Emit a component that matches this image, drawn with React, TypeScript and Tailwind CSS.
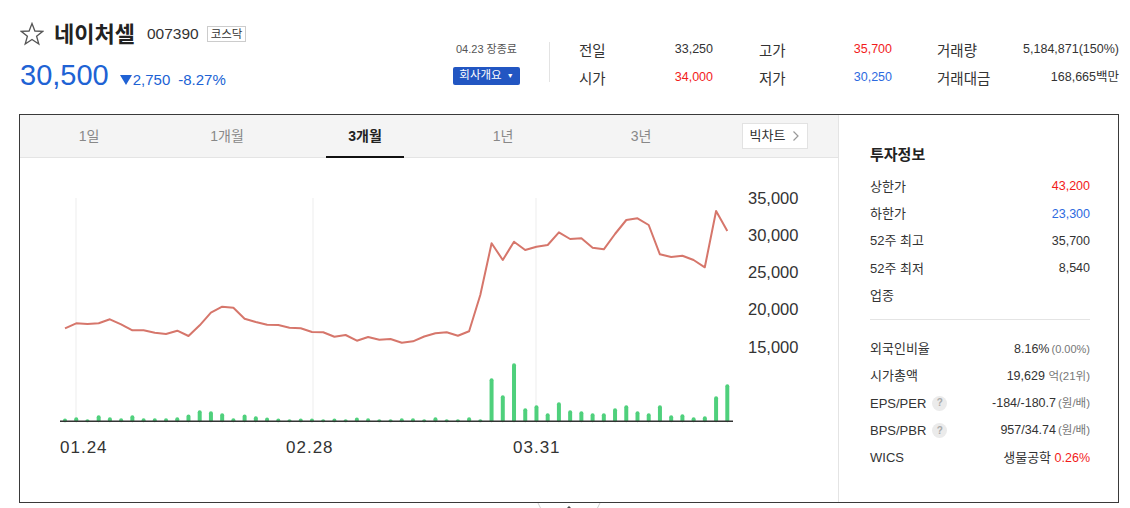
import React from 'react';

const FONT = '"Liberation Sans", "Noto Sans CJK KR", sans-serif';

// closing price, already in pixel rows of the chart (page coords)
const PRICE_Y = [
  328.3, 323.3, 324, 323.3, 319.3, 324.3, 330.3, 330.3, 332.7, 334, 330.7, 336, 325.3, 312.7, 306.7,
  307.7, 318.7, 322, 324.7, 325, 327.7, 328.3, 332, 332.3, 336.7, 335, 340.7, 337, 339.7, 339,
  342.7, 341.3, 336.5, 333.3, 332.3, 335.7, 331.3, 295, 243.3, 260, 241.7, 250, 246.7, 245, 232.3,
  239, 238.3, 247.7, 249.3, 234, 220, 218.3, 225, 254.3, 257, 255.7, 260, 267.3, 211, 231,
];

const VOLUME = [
  2.7, 4, 2, 6, 4, 3, 6, 3, 3, 3, 4, 6.7, 11, 10, 8, 3, 6.7, 5, 3.7, 2.7, 1.7, 2.7, 2.7, 1.7, 2.7,
  1.7, 3.7, 3, 1.7, 0.7, 3, 3, 2, 4, 2, 2, 4, 1, 43, 26, 58, 13, 16, 8, 19, 11, 10, 8, 8, 13, 16,
  10, 8, 16, 6, 7, 4, 5, 25, 37,
];

const Y_TICKS = [
  { label: '35,000', y: 42 },
  { label: '30,000', y: 79 },
  { label: '25,000', y: 116 },
  { label: '20,000', y: 153 },
  { label: '15,000', y: 191 },
];

const X_TICKS = [
  { label: '01.24', x: 40, grid: 56 },
  { label: '02.28', x: 266, grid: 293 },
  { label: '03.31', x: 493, grid: 516 },
];

const TABS = ['1일', '1개월', '3개월', '1년', '3년'];

function PriceChart() {
  const x0 = 45;
  const step = 662.3 / 59;
  const base = 263.3;
  const points = PRICE_Y.map((y, i) => `${(x0 + i * step).toFixed(1)},${(y - 158).toFixed(1)}`).join(' ');

  return (
    <svg width="818" height="344" className="block">
      {X_TICKS.map((t) => (
        <line key={t.grid} x1={t.grid} x2={t.grid} y1={40} y2={base} stroke="#ededed" strokeWidth={1} />
      ))}
      {VOLUME.map((h, i) => {
        const cx = x0 + i * step;
        const hh = Math.max(h, 2);
        return <rect key={i} x={cx - 2} y={base - hh} width={4} height={hh + 1} rx={2} fill="#4fd07c" />;
      })}
      <line x1={40} x2={713} y1={base} y2={base} stroke="#333" strokeWidth={1.5} />
      <polyline points={points} fill="none" stroke="#d6766b" strokeWidth={2} strokeLinejoin="round" />
      {Y_TICKS.map((t) => (
        <text key={t.label} x={728} y={t.y} dominantBaseline="middle" fontSize={16.5} fill="#333" fontFamily={FONT}>
          {t.label}
        </text>
      ))}
      {X_TICKS.map((t) => (
        <text key={t.label} x={t.x} y={291} dominantBaseline="middle" fontSize={17} letterSpacing={1} fill="#333" fontFamily={FONT}>
          {t.label}
        </text>
      ))}
    </svg>
  );
}

function Help() {
  return (
    <span className="ml-[6px] inline-flex h-[15px] w-[15px] items-center justify-center rounded-full bg-[#ebebeb] text-[10px] font-bold leading-none text-[#aaa]">
      ?
    </span>
  );
}

function InfoRow({ label, children }: { label: React.ReactNode; children: React.ReactNode }) {
  return (
    <div className="flex h-[27.25px] items-center justify-between">
      <span className="flex items-center text-[13px] text-[#333]">{label}</span>
      <span className="text-[12.5px] text-[#333]">{children}</span>
    </div>
  );
}

function Quote({ label, value, color = 'text-[#333]', width }: { label: string; value: string; color?: string; width: string }) {
  return (
    <div className={`flex h-[20px] items-center justify-between ${width}`}>
      <span className="mt-[3px] text-[14.5px] text-[#333]">{label}</span>
      <span className={`mb-[1px] text-[12.5px] ${color}`}>{value}</span>
    </div>
  );
}

export default function App() {
  return (
    <div className="h-[508px] w-[1130px] overflow-hidden bg-white pl-[19px]" style={{ fontFamily: FONT }}>
      {/* Header */}
      <div className="flex h-[114px] items-start pl-[1px]">
        <div className="mt-[18px] w-[433px]">
          <div className="flex h-[32px] items-center">
            <svg width="24" height="24" viewBox="0 0 24 24" className="shrink-0">
              <polygon
                points="12,1.5 14.9,9 22.8,9.3 16.6,14.2 18.8,22 12,17.5 5.2,22 7.4,14.2 1.2,9.3 9.1,9"
                fill="none"
                stroke="#555"
                strokeWidth="1.3"
                strokeLinejoin="miter"
              />
            </svg>
            <span className="ml-[10px] text-[22px] font-bold text-[#222]">네이처셀</span>
            <span className="ml-[12px] text-[15.5px] text-[#333]">007390</span>
            <span className="ml-[8px] border border-[#ccc] px-[3px] text-[11.5px] leading-[14px] text-[#333]">코스닥</span>
          </div>
          <div className="mt-[8px] flex h-[34px] items-baseline text-[#2062d4]">
            <span className="text-[29px] leading-[34px]">30,500</span>
            <svg width="12" height="10" viewBox="0 0 12 10" className="ml-[11px]">
              <polygon points="0,0 12,0 6,10" fill="#2062d4" />
            </svg>
            <span className="ml-[1px] text-[15px]">2,750</span>
            <span className="ml-[8px] text-[15px]">-8.27%</span>
          </div>
        </div>

        <div className="mt-[41px] w-[67px]">
          <div className="h-[16px] pl-[3px] text-[11px] leading-[16px] text-[#555]">04.23 장종료</div>
          <div className="mt-[10px] flex h-[18px] items-center justify-center rounded-[2px] bg-[#2256c2] text-[11.5px] text-white">
            회사개요
            <span className="ml-[5px] text-[7px]">▼</span>
          </div>
        </div>

        <div className="ml-[29px] mt-[42px] h-[40px] w-px bg-[#e3e3e3]" />

        <div className="ml-[29px] mt-[40px] flex">
          <div className="flex flex-col gap-y-[8px]">
            <Quote label="전일" value="33,250" width="w-[134px]" />
            <Quote label="시가" value="34,000" color="text-[#f21b1b]" width="w-[134px]" />
          </div>
          <div className="ml-[46px] flex flex-col gap-y-[8px]">
            <Quote label="고가" value="35,700" color="text-[#f21b1b]" width="w-[133px]" />
            <Quote label="저가" value="30,250" color="text-[#2d6ae0]" width="w-[133px]" />
          </div>
          <div className="ml-[45px] flex flex-col gap-y-[8px]">
            <Quote label="거래량" value="5,184,871(150%)" width="w-[182px]" />
            <Quote label="거래대금" value="168,665백만" width="w-[182px]" />
          </div>
        </div>
      </div>

      {/* Chart box */}
      <div className="flex h-[389px] w-[1100px] border border-[#3a3a3a]">
        <div className="w-[818px]">
          <div className="flex h-[43px] items-center border-b border-[#e4e4e4] bg-[#f4f4f4]">
            {TABS.map((tab) => {
              const active = tab === '3개월';
              return (
                <div key={tab} className="relative flex h-full w-[138px] items-center justify-center">
                  <span className={active ? 'text-[14px] font-bold text-[#222]' : 'text-[14px] text-[#888]'}>{tab}</span>
                  {active && <span className="absolute bottom-[-1px] left-[30px] h-[2px] w-[78px] bg-[#111]" />}
                </div>
              );
            })}
            <div className="ml-[32px] flex h-[26px] w-[66px] items-center justify-center border border-[#e2e2e2] bg-white text-[13px] text-[#333]">
              빅차트
              <svg width="8" height="12" viewBox="0 0 8 12" className="ml-[7px]">
                <polyline points="1.5,1.5 6,6 1.5,10.5" fill="none" stroke="#999" strokeWidth="1.2" />
              </svg>
            </div>
          </div>
          <PriceChart />
        </div>

        <div className="w-[280px] border-l border-[#e4e4e4] pl-[31px] pr-[28px] pt-[30px]">
          <div className="h-[20px] text-[15px] font-bold leading-[20px] text-[#222]">투자정보</div>
          <div className="mt-[8px]">
            <InfoRow label="상한가"><span className="text-[#f21b1b]">43,200</span></InfoRow>
            <InfoRow label="하한가"><span className="text-[#2d6ae0]">23,300</span></InfoRow>
            <InfoRow label="52주 최고">35,700</InfoRow>
            <InfoRow label="52주 최저">8,540</InfoRow>
            <InfoRow label="업종">{''}</InfoRow>
          </div>
          <div className="mt-[10px] h-px bg-[#e4e4e4]" />
          <div className="mt-[15px]">
            <InfoRow label="외국인비율">
              8.16%<span className="ml-[2px] text-[11px] text-[#777]">(0.00%)</span>
            </InfoRow>
            <InfoRow label="시가총액">
              19,629 <span className="text-[11.5px] text-[#777]">억(21위)</span>
            </InfoRow>
            <InfoRow label={<>EPS/PER<Help /></>}>
              -184/-180.7<span className="ml-[2px] text-[11.5px] text-[#777]">(원/배)</span>
            </InfoRow>
            <InfoRow label={<>BPS/PBR<Help /></>}>
              957/34.74<span className="ml-[2px] text-[11.5px] text-[#777]">(원/배)</span>
            </InfoRow>
            <InfoRow label="WICS">
              <span className="text-[13px]">생물공학</span> <span className="text-[#f21b1b]">0.26%</span>
            </InfoRow>
          </div>
        </div>
      </div>

      {/* collapse handle */}
      <div className="flex w-[1100px] justify-center">
        <svg width="64" height="6" viewBox="0 0 64 6">
          <line x1="1" y1="0" x2="4" y2="6" stroke="#cfcfcf" />
          <line x1="63" y1="0" x2="60" y2="6" stroke="#cfcfcf" />
          <polygon points="29,6 32,3 35,6" fill="#444" />
        </svg>
      </div>
    </div>
  );
}
